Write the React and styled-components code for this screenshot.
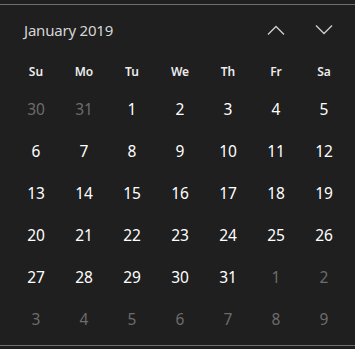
import React from 'react';
import styled, { createGlobalStyle } from 'styled-components';

const GlobalStyle = createGlobalStyle`
  html, body {
    margin: 0;
    padding: 0;
    background: #1f1f1f;
  }
  * {
    box-sizing: border-box;
  }
`;

const Flyout = styled.div`
  width: 355px;
  padding-top: 4px;
  font-family: 'Noto Sans', 'Open Sans', sans-serif;
  background: #1f1f1f;
`;

const Panel = styled.div`
  border-top: 1px solid #6e6e6e;
  border-bottom: 1px solid #6e6e6e;
  padding: 0 7px 5px 12px;
`;

const Header = styled.div`
  display: grid;
  grid-template-columns: 1fr 48px 48px;
  align-items: center;
  height: 49px;
`;

const Title = styled.div`
  padding-left: 12px;
  font-size: 15px;
  color: #d6d6d6;
  letter-spacing: -0.2px;
`;

const NavButton = styled.button`
  display: flex;
  align-items: center;
  justify-content: center;
  height: 32px;
  padding: 0;
  border: none;
  background: transparent;
  color: #cfcfcf;
  cursor: pointer;
`;

const Grid = styled.div`
  display: grid;
  grid-template-columns: repeat(7, 48px);
`;

const WeekDay = styled.div`
  display: flex;
  align-items: center;
  justify-content: center;
  height: 34px;
  font-size: 12px;
  font-weight: 600;
  color: #ececec;
`;

const Day = styled.div`
  display: flex;
  align-items: center;
  justify-content: center;
  height: 42px;
  font-size: 15.5px;
  color: ${(p) => (p.$outside ? '#6c6c6c' : '#ffffff')};
`;

const Chevron = ({ up }) => (
  <svg width="18" height="10" viewBox="0 0 18 10" fill="none">
    <path
      d={up ? 'M1 9.5 L9 1.5 L17 9.5' : 'M1 0.5 L9 8.5 L17 0.5'}
      stroke="currentColor"
      strokeWidth="1.3"
    />
  </svg>
);

const weekDays = ['Su', 'Mo', 'Tu', 'We', 'Th', 'Fr', 'Sa'];

const days = [
  { n: 30, out: true },
  { n: 31, out: true },
  ...Array.from({ length: 31 }, (_, i) => ({ n: i + 1 })),
  ...Array.from({ length: 9 }, (_, i) => ({ n: i + 1, out: true })),
];

export default function App() {
  return (
    <>
      <GlobalStyle />
      <Flyout>
        <Panel>
          <Header>
            <Title>January 2019</Title>
            <NavButton aria-label="Previous month">
              <Chevron up />
            </NavButton>
            <NavButton aria-label="Next month">
              <Chevron />
            </NavButton>
          </Header>
          <Grid>
            {weekDays.map((d) => (
              <WeekDay key={d}>{d}</WeekDay>
            ))}
            {days.map((d, i) => (
              <Day key={i} $outside={d.out}>
                {d.n}
              </Day>
            ))}
          </Grid>
        </Panel>
      </Flyout>
    </>
  );
}
